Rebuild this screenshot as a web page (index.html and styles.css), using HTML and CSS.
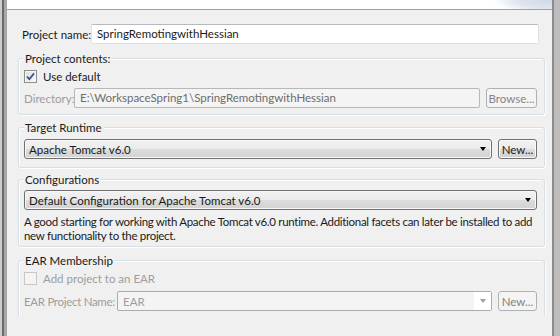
FILE: index.html
```html
<!DOCTYPE html>
<html>
<head>
<meta charset="utf-8">
<link rel="stylesheet" href="styles.css">
</head>
<body>
<div class="window">
  <div class="edge-left"></div>
  <div class="main">
    <div class="banner"></div>
    <div class="pane">
      <div class="name-row">
        <span class="lbl name-lbl">Project name:</span>
        <div class="textbox">SpringRemotingwithHessian</div>
      </div>

      <div class="group g1">
        <div class="legend">Project contents:</div>
        <div class="check-row">
          <span class="checkbox">
            <svg width="9" height="9" viewBox="0 0 9 9"><path d="M1 4.6 L3.4 7.2 L8 1.4" fill="none" stroke="#3d4f80" stroke-width="1.7"/></svg>
          </span>
          <span>Use default</span>
        </div>
        <div class="ctl-row dir-row">
          <span class="lbl dis dir-lbl">Directory:</span>
          <div class="textbox dis">E:\WorkspaceSpring1\SpringRemotingwithHessian</div>
          <div class="btn dis browse">Browse...</div>
        </div>
      </div>

      <div class="group g2">
        <div class="legend">Target Runtime</div>
        <div class="ctl-row rt-row">
          <div class="combo"><span class="combo-text">Apache Tomcat v6.0</span><span class="arrow"></span></div>
          <div class="btn new">New...</div>
        </div>
      </div>

      <div class="group g3">
        <div class="legend">Configurations</div>
        <div class="ctl-row cfg-row">
          <div class="combo"><span class="combo-text">Default Configuration for Apache Tomcat v6.0</span><span class="arrow"></span></div>
        </div>
        <p class="desc">A good starting for working with Apache Tomcat v6.0 runtime. Additional facets can later be installed to add new functionality to the project.</p>
      </div>

      <div class="group g4">
        <div class="legend">EAR Membership</div>
        <div class="check-row dis">
          <span class="checkbox dis-box"></span>
          <span>Add project to an EAR</span>
        </div>
        <div class="ctl-row ear-row">
          <span class="lbl dis ear-lbl">EAR Project Name:</span>
          <div class="combo dis-combo"><span class="combo-text">EAR</span><span class="arrow-zone"><span class="arrow"></span></span></div>
          <div class="btn dis new">New...</div>
        </div>
      </div>
    </div>
  </div>
  <div class="edge-right"></div>
</div>
</body>
</html>
```

FILE: styles.css
```css
* { box-sizing: border-box; }
html, body { margin: 0; padding: 0; }
body {
  width: 560px;
  height: 336px;
  overflow: hidden;
  background: #f0f0f0;
  font-family: Lato, "Open Sans", sans-serif;
  font-size: 11.5px;
  color: #1a1a1a;
}
.window { display: flex; height: 336px; }
.edge-left {
  width: 7px;
  flex: none;
  background: linear-gradient(to right, #cdcdcd 0 2px, #6a6a6a 2px 4px, #a8a8a8 4px 7px);
}
.edge-right {
  width: 8px;
  flex: none;
  background: linear-gradient(to right, #8c8c8c 0 2px, #bdbdbd 2px 8px);
}
.main { flex: 1; min-width: 0; display: flex; flex-direction: column; }
.banner {
  height: 10px;
  flex: none;
  border-bottom: 1px solid #a0a0a0;
  background:
    radial-gradient(ellipse 60px 14px at 100% 0, #cfd8e6 0, #dfe5ef 60%, rgba(255,255,255,0) 100%),
    #fff;
}
.pane { height: 306px; overflow: hidden; padding-top: 14px; flex: none; }

.name-row { display: flex; align-items: center; height: 20px; margin: 0 13px 0 15px; }
.name-lbl { width: 69px; flex: none; }
.textbox {
  flex: 1;
  height: 20px;
  line-height: 18px;
  padding: 0 5px;
  background: #fff;
  border: 1px solid #dde1e6;
  border-top-color: #b5b8bd;
  border-radius: 2px;
  white-space: nowrap;
  overflow: hidden;
}
.textbox.dis {
  background: #f4f4f4;
  border-color: #b8b8b8;
  color: #6d6d6d;
}
.lbl { white-space: nowrap; }
.dis { color: #9d9d9d; }

.group {
  margin: 14px 7px 0 11px;
  border: 1px solid #d5dfe5;
  border-radius: 3px;
  box-shadow: inset 1px 1px 0 #fff, 1px 1px 0 #fff;
  padding: 0 7px 6px 5px;
}
.legend {
  width: fit-content;
  margin: -8px 0 0 0;
  padding: 0 2px 0 1px;
  height: 15px;
  line-height: 15px;
  background: #f0f0f0;
  white-space: nowrap;
}
.g2 { margin-top: 12px; padding-bottom: 8px; }
.g3 { margin-top: 11px; padding-bottom: 3px; }
.g4 { margin-top: 13px; }

.check-row { display: flex; align-items: center; gap: 6px; height: 13px; margin-top: 4px; }
.checkbox {
  width: 13px;
  height: 13px;
  flex: none;
  border: 1px solid #8e8f8f;
  background: linear-gradient(135deg, #dcdcdc, #fbfbfb);
  box-shadow: inset 0 0 0 1px #f4f4f4;
  display: flex;
  align-items: center;
  justify-content: center;
}
.checkbox.dis-box { border-color: #c8c8c8; background: #f4f4f4; box-shadow: none; }

.ctl-row { display: flex; align-items: center; gap: 6px; height: 20px; }
.dir-row { margin-top: 5px; }
.dir-lbl { width: 44px; flex: none; }
.browse { width: 51px; }
.rt-row { margin-top: 4px; }
.cfg-row { margin-top: 3px; }
.ear-row { margin-top: 6px; }
.ear-lbl { width: 87px; flex: none; letter-spacing: -0.3px; }

.btn {
  height: 20px;
  flex: none;
  border: 1px solid #707070;
  border-radius: 3px;
  background: linear-gradient(#f2f2f2 0, #ebebeb 50%, #dddddd 50%, #cfcfcf 100%);
  box-shadow: inset 0 0 0 1px #fbfbfb;
  display: flex;
  align-items: center;
  justify-content: center;
  white-space: nowrap;
}
.btn.dis { background: #f4f4f4; border-color: #adb2b5; box-shadow: none; color: #838383; }
.new { width: 39px; }

.combo {
  flex: 1;
  height: 20px;
  border: 1px solid #707070;
  border-radius: 3px;
  background: linear-gradient(#f2f2f2 0, #ebebeb 50%, #dddddd 50%, #d2d2d2 100%);
  box-shadow: inset 0 0 0 1px #f8f8f8;
  display: flex;
  align-items: center;
  padding: 0 5px 0 4px;
}
.combo-text { flex: 1; white-space: nowrap; overflow: hidden; }
.arrow {
  width: 0;
  height: 0;
  border-left: 3.5px solid transparent;
  border-right: 3.5px solid transparent;
  border-top: 4px solid #000;
  flex: none;
}
.dis-combo {
  background: #f4f4f4;
  border-color: #acacac;
  border-radius: 2px;
  box-shadow: none;
  color: #9d9d9d;
  padding: 0 0 0 5px;
}
.arrow-zone {
  width: 17px;
  align-self: stretch;
  background: #fff;
  display: flex;
  align-items: center;
  justify-content: center;
}
.arrow-zone .arrow { border-top-color: #a0a0a0; }

.desc { margin: 5px 0 0 0; line-height: 14px; letter-spacing: -0.3px; }
```
